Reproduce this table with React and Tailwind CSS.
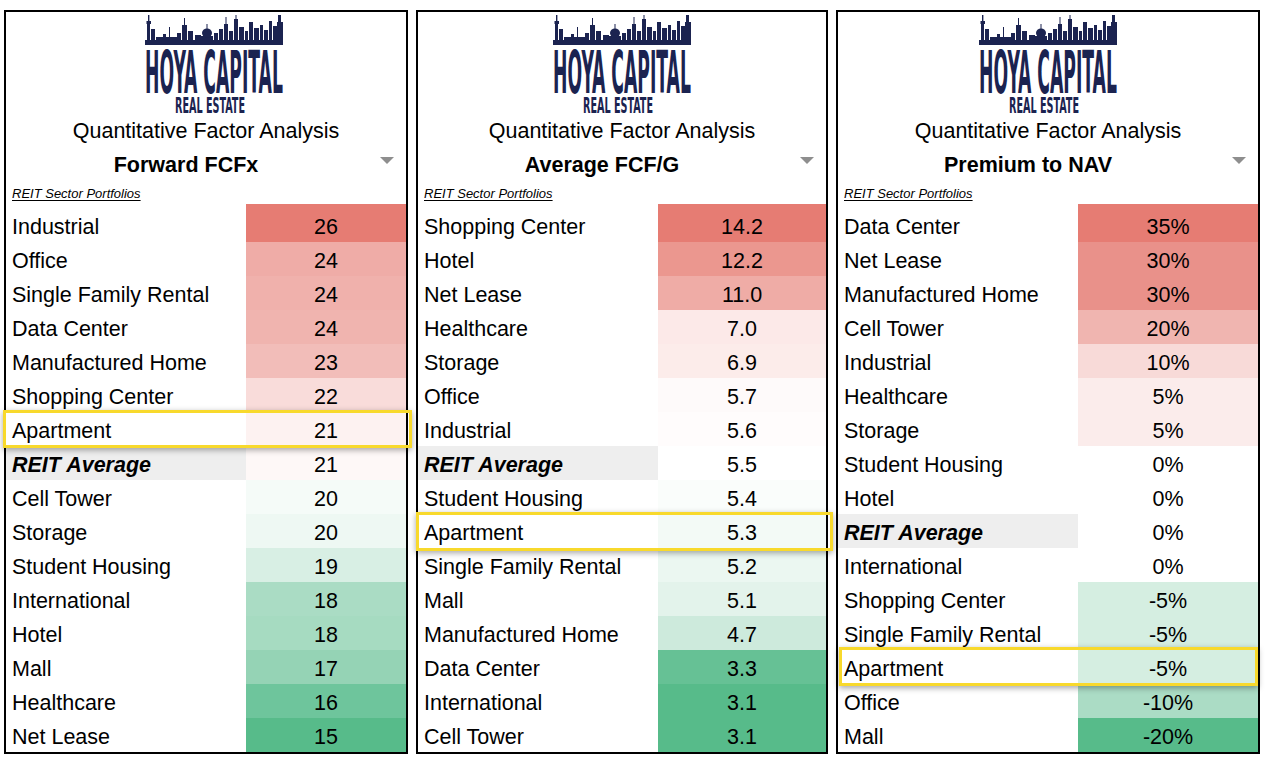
import React from 'react';

const NAVY = '#1b2350';

const panels = [
  {
    title: 'Forward FCFx',
    width: 'w-[404px]',
    logoClass: 'ml-[16px]',
    boxClass: 'top-[206px] left-[-3px] right-[-6px] h-[38px]',
    rows: [
      ['Industrial', '26', 'bg-[#e67c73]'],
      ['Office', '24', 'bg-[#efaca7]'],
      ['Single Family Rental', '24', 'bg-[#f0b1ac]'],
      ['Data Center', '24', 'bg-[#f0b4af]'],
      ['Manufactured Home', '23', 'bg-[#f2bdb9]'],
      ['Shopping Center', '22', 'bg-[#f9dcda]'],
      ['Apartment', '21', 'bg-[#fdf2f1]'],
      ['REIT Average', '21', 'bg-[#fef8f7]', true],
      ['Cell Tower', '20', 'bg-[#f5fbf8]'],
      ['Storage', '20', 'bg-[#eef8f3]'],
      ['Student Housing', '19', 'bg-[#d8efe4]'],
      ['International', '18', 'bg-[#aadcc4]'],
      ['Hotel', '18', 'bg-[#a6dbc1]'],
      ['Mall', '17', 'bg-[#95d3b5]'],
      ['Healthcare', '16', 'bg-[#6ec59c]'],
      ['Net Lease', '15', 'bg-[#57bb8a]'],
    ],
  },
  {
    title: 'Average FCF/G',
    width: 'w-[412px]',
    logoClass: '',
    boxClass: 'top-[308px] left-[-2px] right-[-7px] h-[39px]',
    rows: [
      ['Shopping Center', '14.2', 'bg-[#e67c73]'],
      ['Hotel', '12.2', 'bg-[#eb978f]'],
      ['Net Lease', '11.0', 'bg-[#efaca6]'],
      ['Healthcare', '7.0', 'bg-[#fce9e8]'],
      ['Storage', '6.9', 'bg-[#fcecea]'],
      ['Office', '5.7', 'bg-[#fefafa]'],
      ['Industrial', '5.6', 'bg-[#fffcfc]'],
      ['REIT Average', '5.5', 'bg-[#ffffff]', true],
      ['Student Housing', '5.4', 'bg-[#fafdfb]'],
      ['Apartment', '5.3', 'bg-[#f3faf6]'],
      ['Single Family Rental', '5.2', 'bg-[#ebf7f1]'],
      ['Mall', '5.1', 'bg-[#e3f3eb]'],
      ['Manufactured Home', '4.7', 'bg-[#cdeadc]'],
      ['Data Center', '3.3', 'bg-[#66c195]'],
      ['International', '3.1', 'bg-[#57bb8a]'],
      ['Cell Tower', '3.1', 'bg-[#57bb8a]'],
    ],
  },
  {
    title: 'Premium to NAV',
    width: 'w-[424px]',
    logoClass: '',
    boxClass: 'top-[443px] left-[1px] right-[0px] h-[39px]',
    rows: [
      ['Data Center', '35%', 'bg-[#e67c73]'],
      ['Net Lease', '30%', 'bg-[#e9918a]'],
      ['Manufactured Home', '30%', 'bg-[#e9918a]'],
      ['Cell Tower', '20%', 'bg-[#f0b5b0]'],
      ['Industrial', '10%', 'bg-[#f8dad8]'],
      ['Healthcare', '5%', 'bg-[#fbeceb]'],
      ['Storage', '5%', 'bg-[#fbeceb]'],
      ['Student Housing', '0%', 'bg-[#ffffff]'],
      ['Hotel', '0%', 'bg-[#ffffff]'],
      ['REIT Average', '0%', 'bg-[#ffffff]', true],
      ['International', '0%', 'bg-[#ffffff]'],
      ['Shopping Center', '-5%', 'bg-[#d5eee1]'],
      ['Single Family Rental', '-5%', 'bg-[#d5eee1]'],
      ['Apartment', '-5%', 'bg-[#d5eee1]'],
      ['Office', '-10%', 'bg-[#abdcc5]'],
      ['Mall', '-20%', 'bg-[#57bb8a]'],
    ],
  },
];

// skyline drawing + wordmark (wordmark stays real <text>, squeezed by a transform)
function HoyaLogo() {
  const blocks = [
    [0, 25, 138, 5],
    [3, 0, 1.4, 25], [1.5, 6, 4.5, 3], [2, 9, 3, 16], [6, 14, 4, 11],
    [11, 22, 22, 3], [18, 19, 3, 3], [24, 12, 1, 10],
    [32, 18, 4, 7], [37, 10, 5, 15], [39, 3, 1, 7], [43, 16, 5, 9],
    [50, 20, 6, 5], [56, 21, 12, 4], [58, 16, 8, 5], [61.5, 9, 1, 5],
    [69, 18, 4, 7], [74, 14, 4, 11], [79, 9, 4, 16], [80.5, 2, 1, 7],
    [84, 16, 4, 9], [89, 4, 4, 21], [90.5, 0, 1, 4], [94, 12, 5, 13],
    [100, 16, 3, 9], [104, 7, 4, 18], [109, 13, 5, 12], [115, 10, 3, 15],
    [119, 15, 4, 10], [124, 6, 3, 19], [128, 11, 4, 14], [133, 0, 3, 25], [132, 7, 6, 18],
  ];
  return (
    <svg width="138" height="98" viewBox="0 0 138 98" className="overflow-visible">
      {blocks.map(([x, y, w, h], i) => (
        <rect key={i} x={x} y={y} width={w} height={h} fill={NAVY} />
      ))}
      <ellipse cx="62" cy="18" rx="5" ry="4.5" fill={NAVY} />
      <g transform="translate(0 78) scale(0.33 1)">
        <text
          x="0"
          y="0"
          textLength="418"
          lengthAdjust="spacingAndGlyphs"
          fontFamily="'DejaVu Sans Condensed', 'DejaVu Sans', sans-serif"
          fontWeight="bold"
          fontSize="59"
          fill={NAVY}
        >
          HOYA CAPITAL
        </text>
      </g>
      <g transform="translate(30 98) scale(0.5 1)">
        <text
          x="0"
          y="0"
          textLength="140"
          lengthAdjust="spacingAndGlyphs"
          fontFamily="'DejaVu Sans Condensed', 'DejaVu Sans', sans-serif"
          fontWeight="bold"
          fontSize="22"
          fill={NAVY}
        >
          REAL ESTATE
        </text>
      </g>
    </svg>
  );
}

function Panel({ panel }) {
  return (
    <div className={`${panel.width} h-[744px] border-2 border-black flex flex-col bg-white`}>
      {/* Header block */}
      <div className="h-[192px] flex flex-col">
        <div className="mt-[3px] h-[98px] flex justify-center">
          <div className={panel.logoClass}>
            <HoyaLogo />
          </div>
        </div>
        <div className="mt-[6px] h-[24px] leading-[24px] text-center text-[21.5px] text-black">
          Quantitative Factor Analysis
        </div>
        <div className="relative mt-[10px] h-[24px] pr-[40px] leading-[24px] text-center text-[21.5px] font-bold text-black">
          {panel.title}
          <span className="absolute right-[12px] top-[4px] w-0 h-0 border-l-[7px] border-r-[7px] border-t-[7px] border-l-transparent border-r-transparent border-t-[#8e8e8e]" />
        </div>
        <div className="mt-[8px] h-[17px] pl-[6px] leading-[17px] text-[13px] italic underline underline-offset-2 text-black">
          REIT Sector Portfolios
        </div>
      </div>

      {/* Sector rows */}
      <div className="relative flex-1 flex flex-col">
        {panel.rows.map(([name, value, bg, isAvg], i) => (
          <div
            key={name}
            className={`${i === 0 ? 'h-[38px]' : 'h-[34px]'} flex text-[21.5px] leading-[24px] text-black`}
          >
            <div
              className={`w-[240px] pl-[6px] pb-[3px] flex items-end ${
                isAvg ? 'bg-[#eeeeee] font-bold italic' : ''
              }`}
            >
              {name}
            </div>
            <div className={`flex-1 pb-[3px] flex items-end justify-center ${bg}`}>{value}</div>
          </div>
        ))}
        <div
          className={`absolute ${panel.boxClass} border-[3px] border-[#f8d92c] shadow-[0_2px_6px_rgba(0,0,0,0.35)]`}
        />
      </div>
    </div>
  );
}

export default function App() {
  return (
    <div className="w-[1268px] h-[758px] bg-white font-['Liberation_Sans',Arial,sans-serif] flex gap-[8px] pl-[4px] pt-[10px]">
      {panels.map((p) => (
        <Panel key={p.title} panel={p} />
      ))}
    </div>
  );
}
